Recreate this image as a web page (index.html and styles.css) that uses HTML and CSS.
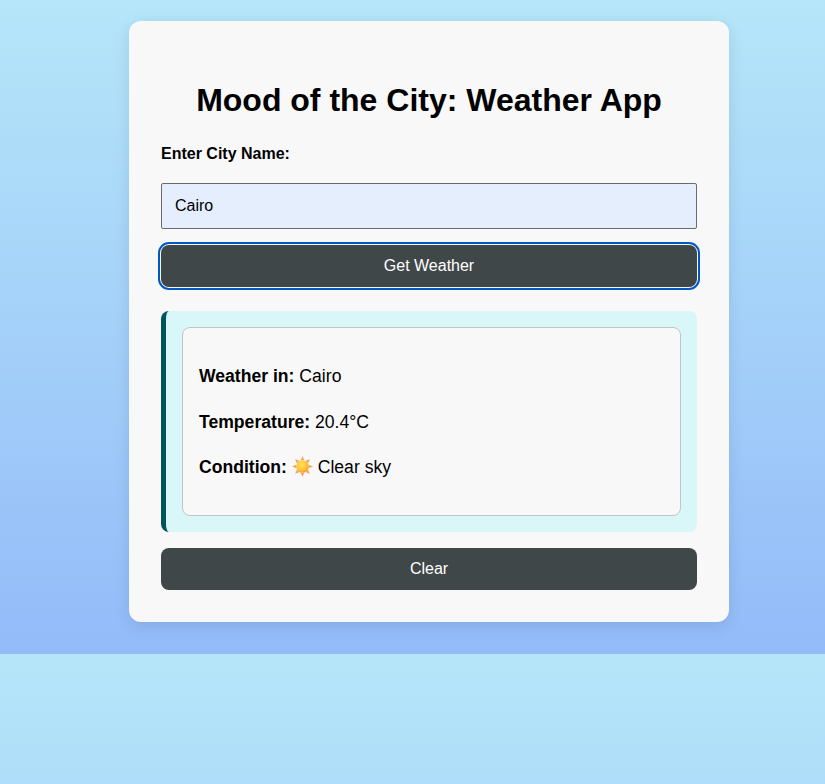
FILE: index.html
```html
<!DOCTYPE html>
<html lang="en">
<head>
<meta charset="utf-8">
<title>Mood of the City</title>
<link rel="stylesheet" href="styles.css">
</head>
<body>
<main class="app">
  <h1>Mood of the City: Weather App</h1>
  <label class="label" for="city">Enter City Name:</label>
  <input class="city" id="city" type="text" value="Cairo">
  <button class="btn btn-focus" type="button">Get Weather</button>
  <section class="result">
    <div class="card">
      <p><strong>Weather in:</strong> Cairo</p>
      <p><strong>Temperature:</strong> 20.4°C</p>
      <p><strong>Condition:</strong> <svg class="sun" viewBox="0 0 20 20" aria-hidden="true">
        <defs><radialGradient id="g" cx=".42" cy=".36" r=".64"><stop offset="0" stop-color="#ffe24f"/><stop offset=".6" stop-color="#ffc93c"/><stop offset="1" stop-color="#f89c3c"/></radialGradient></defs>
        <g fill="#f4a257">
          <path id="r" d="M10 0 L11.7 4.2 Q10 3.6 8.3 4.2Z"/>
          <use href="#r" transform="rotate(45 10 10)"/><use href="#r" transform="rotate(90 10 10)"/><use href="#r" transform="rotate(135 10 10)"/><use href="#r" transform="rotate(180 10 10)"/><use href="#r" transform="rotate(225 10 10)"/><use href="#r" transform="rotate(270 10 10)"/><use href="#r" transform="rotate(315 10 10)"/>
        </g>
        <circle cx="10" cy="10" r="6" fill="url(#g)"/>
      </svg> Clear sky</p>
    </div>
  </section>
  <button class="btn" type="button">Clear</button>
</main>
</body>
</html>
```
FILE: styles.css
```css
* { box-sizing: border-box; }
body {
  margin: 0;
  height: 654px;
  padding: 21px 0 32px 33px;
  font-family: "Liberation Sans", Arial, sans-serif;
  font-size: 16px;
  color: #000;
  background: linear-gradient(#b5e6f9, #93bbf9);
}
.app {
  width: 600px;
  height: 601px;
  margin: 0 auto;
  padding: 32px;
  background: #f8f8f8;
  border-radius: 12px;
  box-shadow: 0 4px 16px rgba(0, 0, 0, 0.1);
}
h1 { margin: 28px 0 26px; font-size: 32px; line-height: 38px; text-align: center; white-space: nowrap; }
.label { display: block; height: 18px; line-height: 18px; margin-bottom: 20px; font-weight: bold; }
.city {
  display: block;
  width: 100%;
  height: 46px;
  margin: 0 0 16px;
  padding: 0 13px;
  border: 1px solid #6b6b6b;
  border-radius: 2px;
  background: #e5eefd;
  font: inherit;
}
.btn {
  display: block;
  width: 100%;
  height: 42px;
  padding: 0;
  border: 0;
  border-radius: 8px;
  background: #3f4749;
  color: #fff;
  font: inherit;
}
.btn-focus { outline: 2px solid #0059c1; outline-offset: 1px; }
.result {
  height: 221px;
  margin: 24px 0 16px;
  padding: 16px;
  background: #d9f7f8;
  border-left: 5px solid #00555c;
  border-radius: 8px;
}
.card {
  height: 189px;
  padding: 34px 16px;
  border: 1px solid #c3c4c6;
  border-radius: 8px;
  background: #f8f8f8;
  font-size: 17.6px;
}
.card p { margin: 0 0 17.5px; height: 28px; line-height: 28px; white-space: nowrap; }
.sun { width: 21px; height: 21px; vertical-align: -4px; }
```
